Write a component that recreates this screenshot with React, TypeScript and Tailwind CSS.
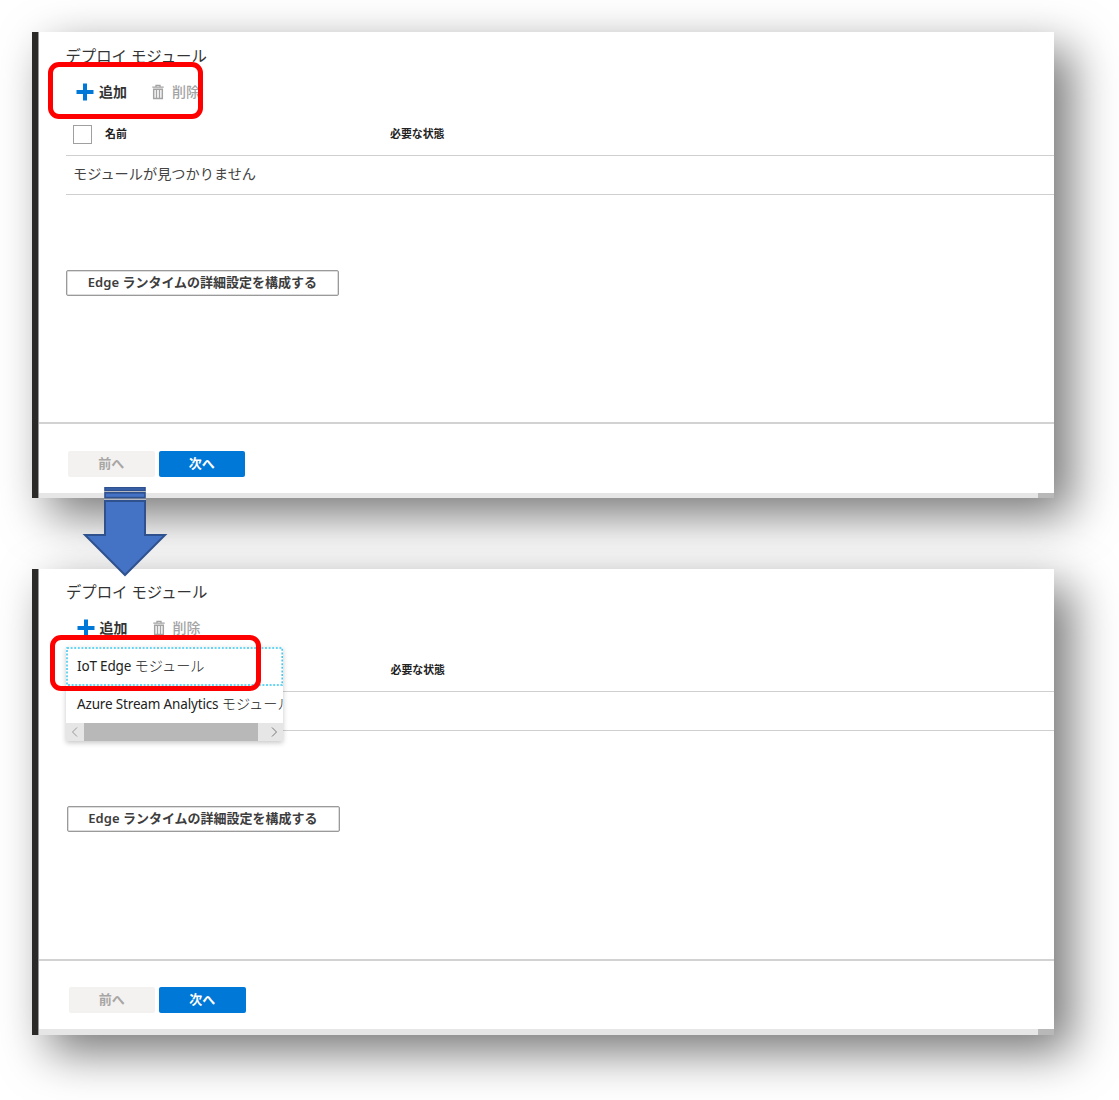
function PlusIcon() {
  return (
    <svg className="h-[18px] w-[18px] shrink-0" viewBox="0 0 18 18" fill="#0078d7">
      <path d="M7 0.5h4v6.5h6.5v4H11v6.5H7V11H0.5V7H7z" />
    </svg>
  );
}

function TrashIcon() {
  return (
    <svg className="h-4 w-3 shrink-0" viewBox="0 0 12 16" fill="none" stroke="#a3a3a3">
      <path d="M4 2.4V1.3h4v1.1M0.3 3.2h11.4" strokeWidth="1.3" />
      <path d="M1.7 5.2h8.6v9.4H1.7z" strokeWidth="1.5" />
      <path d="M4.5 6v8M7.5 6v8" strokeWidth="1.4" />
    </svg>
  );
}

function ModuleMenu() {
  return (
    <div className="absolute left-[34px] top-[78px] w-[217px] bg-white text-[13.5px] tracking-[-0.16px] text-[#222] shadow-[0_2px_5px_rgba(0,0,0,0.22)]">
      <div className="relative h-[39px] pl-[11px] leading-[38px]">
        <svg className="absolute left-0 top-0 h-[39px] w-[217px]" fill="none">
          <rect x="1" y="1" width="215.2" height="37" stroke="#35c8f0" strokeWidth="1.5" strokeDasharray="2 1.6" />
        </svg>
        IoT Edge <span className="text-[14.2px] leading-none font-light tracking-normal">モジュール</span>
      </div>
      <div className="h-[37px] overflow-hidden whitespace-nowrap pl-[11px] leading-[36px]">
        Azure Stream Analytics <span className="text-[14.2px] leading-none font-light tracking-normal">モジュール</span>
      </div>
      <div className="flex h-[18px] bg-[#e6e6e6]">
        <svg className="h-[18px] w-[18px] shrink-0" viewBox="0 0 18 18" fill="none" stroke="#999">
          <path d="M11 4.5L6.5 9l4.5 4.5" />
        </svg>
        <div className="w-[174px] shrink-0 bg-[#b8b8b8]" />
        <svg className="ml-[6px] h-[18px] w-[18px] shrink-0" viewBox="0 0 18 18" fill="none" stroke="#777">
          <path d="M8 4.5L12.5 9 8 13.5" />
        </svg>
      </div>
    </div>
  );
}

function Panel({ open = false }: { open?: boolean }) {
  return (
    <section className="relative flex h-[466px] w-[1022px] bg-white shadow-[17px_17px_44px_rgba(0,0,0,0.54)]">
      <div className="w-[6px] shrink-0 bg-[#2b2a28]" />
      <div className="w-px shrink-0 bg-[#999]" />
      <div className="flex min-w-0 flex-1 flex-col overflow-hidden">
        <div className={open ? "-mt-px h-[391px] shrink-0 pl-[27.5px]" : "h-[390px] shrink-0 pl-[27px]"}>
          <h1 className="-ml-[0.6px] h-[47px] pt-[14px] text-[15.4px] leading-[21px] text-[#333]">デプロイ モジュール</h1>
          <div className="flex h-[25px] items-center pl-[10px] text-[14px] leading-none">
            <PlusIcon />
            <span className="ml-[5px] font-bold text-[#333]">追加</span>
            <span className="ml-[25px]"><TrashIcon /></span>
            <span className="ml-[8px] font-medium text-[#a3a3a3]">削除</span>
          </div>
          <div className="flex h-[52px] items-start border-b border-[#cfcfcf] pl-[7px] pt-[21px]">
            {open ? (
              <div className="w-[317px] shrink-0" />
            ) : (
              <>
                <div className="h-[19px] w-[19px] shrink-0 border border-[#a0a0a0]" />
                <span className="ml-[13px] w-[285px] text-[10.9px] leading-[17px] font-bold text-[#222]">名前</span>
              </>
            )}
            <span className="text-[10.9px] leading-[17px] font-bold text-[#222]">必要な状態</span>
          </div>
          <div className="h-[39px] border-b border-[#cfcfcf] pl-[7px] text-[14.2px] leading-[36px] text-[#444]">
            {!open && "モジュールが見つかりません"}
          </div>
          <button className="mt-[75px] block h-[26px] w-[273px] rounded-[2px] border border-[#9a9a9a] pb-[2px] text-[13px] leading-[22px] font-bold text-[#3d3d3d] shadow-[inset_0_0_0_0.5px_#bbb]">
            <span className="font-semibold">Edge</span> ランタイムの詳細設定を構成する
          </button>
        </div>
        <div className={open ? "flex h-[70px] shrink-0 gap-[4px] border-t-2 border-[#d2d2d2] pl-[29.5px] pt-[26px]" : "flex h-[71px] shrink-0 gap-[4px] border-t-2 border-[#d2d2d2] pl-[29px] pt-[27px]"}>
          <button className="h-[26px] w-[86.5px] rounded-[2px] bg-[#f3f2f1] pb-[2px] text-[13px] leading-[24px] font-bold text-[#a8a6a4]">前へ</button>
          <button className="h-[26px] w-[86.5px] rounded-[2px] bg-[#0078d7] pb-[2px] text-[13px] leading-[24px] font-bold text-white">次へ</button>
        </div>
        <div className="flex flex-1 justify-end bg-[#e6e6e6]">
          <div className="w-[16px] bg-[#b8b8b8]" />
        </div>
      </div>
      {open && <ModuleMenu />}
    </section>
  );
}

function StripedArrow() {
  return (
    <svg className="absolute left-[80px] top-[484px] z-10 h-[96px] w-[90px]" viewBox="80 484 90 96" fill="#4472c4" stroke="#2f528f" strokeWidth="2">
      <path d="M104 491.5h42M104 499.5h42" stroke="#b4b9c2" strokeWidth="1.6" />
      <rect x="105" y="487.8" width="40" height="2.4" strokeWidth="1.6" />
      <rect x="105" y="492.8" width="40" height="4.8" strokeWidth="1.6" />
      <path d="M105 501H145V535H165L125 575 85 535H105Z" />
    </svg>
  );
}

export default function App() {
  return (
    <main className="relative flex h-[1100px] w-[1119px] flex-col gap-[71px] overflow-hidden bg-white pl-8 pt-8 font-['Noto_Sans','Noto_Sans_CJK_JP',sans-serif]">
      <Panel />
      <Panel open />
      <StripedArrow />
      <div className="absolute left-[48px] top-[62px] h-[57px] w-[155px] rounded-[11px] border-[5px] border-[#ff0000]" />
      <div className="absolute left-[50px] top-[635px] h-[56px] w-[211px] rounded-[11px] border-[5px] border-[#ff0000]" />
    </main>
  );
}
